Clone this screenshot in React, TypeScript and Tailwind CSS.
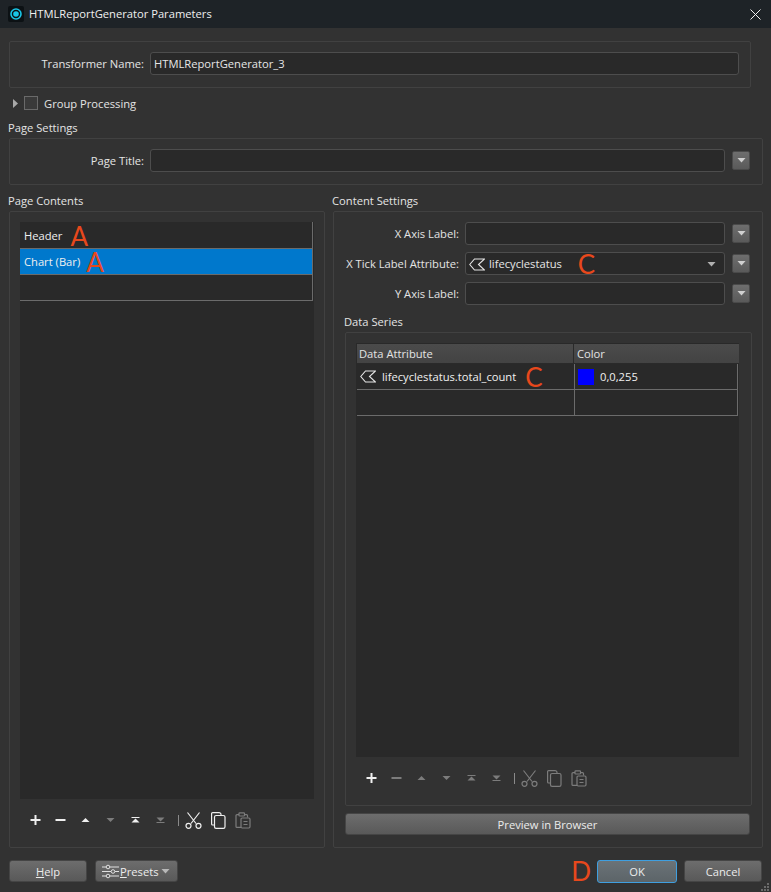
import React from "react";

function Mark({ children, className = "" }: { children: React.ReactNode; className?: string }) {
  return <span className={`font-['Lato',sans-serif] text-[26px] leading-[20px] text-[#e8481c] ${className}`}>{children}</span>;
}

function Arrow({ tone = "#d0d0d0" }: { tone?: string }) {
  return (
    <svg width="9" height="5" viewBox="0 0 9 5"><path d="M0.5 0H8.5L4.5 4.5Z" fill={tone} /></svg>
  );
}

function MenuButton() {
  return (
    <div className="w-[18px] h-[19px] rounded-[2px] border border-[#4a4a4a] bg-gradient-to-b from-[#6e6e6e] to-[#5a5a5a] flex items-center justify-center shrink-0">
      <Arrow />
    </div>
  );
}

function AttrIcon() {
  return (
    <svg width="16" height="13" viewBox="0 0 16 13" fill="none" stroke="#e6e6e6" strokeWidth="1.1" className="shrink-0">
      <path d="M5.5 1H15.5L9.5 6.5L15.5 12H5.5L0.8 6.5Z" />
    </svg>
  );
}

function Field({ label, children, labelW = "w-[141px]" }: { label: string; children?: React.ReactNode; labelW?: string }) {
  return (
    <div className="flex items-center h-[23px]">
      <div className={`${labelW} shrink-0 text-right pr-[6px] pt-[1px]`}>{label}</div>
      {children}
    </div>
  );
}

function Input({ className = "", children }: { className?: string; children?: React.ReactNode }) {
  return (
    <div className={`h-[23px] rounded-[3px] border border-[#4d4d4d] bg-[#292929] flex items-center px-[3px] pt-[1px] text-[#e6e6e6] ${className}`}>
      {children}
    </div>
  );
}

function Group({ className = "", children }: { className?: string; children: React.ReactNode }) {
  return <div className={`border border-[#414141] rounded-[2px] ${className}`}>{children}</div>;
}

type IconName = "plus" | "minus" | "up" | "down" | "top" | "bottom";

function Glyph({ name, tone }: { name: IconName; tone: string }) {
  return (
    <svg width="25" height="24" viewBox="0 0 25 24" fill={tone} className="shrink-0">
      {name === "plus" && <path d="M11.5 7H13.5V11H17.5V13H13.5V17H11.5V13H7.5V11H11.5Z" />}
      {name === "minus" && <rect x="7.5" y="11" width="10" height="2" />}
      {name === "up" && <path d="M12.5 10L16.5 14H8.5Z" />}
      {name === "down" && <path d="M8.5 10H16.5L12.5 14Z" />}
      {name === "top" && (
        <g>
          <rect x="8.5" y="9" width="8" height="1" />
          <path d="M12.5 10.5L16.5 14.5H8.5Z" />
        </g>
      )}
      {name === "bottom" && (
        <g>
          <path d="M8.5 9.5H16.5L12.5 13.5Z" />
          <rect x="8.5" y="14" width="8" height="1" />
        </g>
      )}
    </svg>
  );
}

function Cut({ tone }: { tone: string }) {
  return (
    <svg width="17" height="17" viewBox="0 0 17 17" fill="none" stroke={tone} strokeWidth="1.2" className="shrink-0 mx-[4px]">
      <path d="M2.5 0.5L11 11.5M14.5 0.5L6 11.5" />
      <circle cx="3.5" cy="13.8" r="2.5" />
      <circle cx="13.5" cy="13.8" r="2.5" />
    </svg>
  );
}

function Copy({ tone }: { tone: string }) {
  return (
    <svg width="25" height="17" viewBox="0 0 25 17" fill="none" stroke={tone} strokeWidth="1.2" className="shrink-0">
      <path d="M8.5 13H6.6A1 1 0 0 1 5.6 12V1.6A1 1 0 0 1 6.6 0.6H13A2 2 0 0 1 15 2.6V3.5" />
      <rect x="8.5" y="3.5" width="10.5" height="12.8" rx="1.6" />
    </svg>
  );
}

function Paste({ tone }: { tone: string }) {
  return (
    <svg width="24" height="17" viewBox="0 0 24 17" fill="none" stroke={tone} strokeWidth="1.2" className="shrink-0">
      <path d="M10 15.4H6A1 1 0 0 1 5 14.4V3.6A1 1 0 0 1 6 2.6H8M13.5 2.6H15.5A1 1 0 0 1 16.5 3.6V5.5" />
      <rect x="8" y="0.8" width="5.5" height="3.2" rx="0.8" />
      <rect x="10" y="6" width="9" height="10" rx="1.2" />
      <path d="M12.5 9.5H16.5M12.5 12.5H16.5" />
    </svg>
  );
}

function Toolbar({ on }: { on: boolean }) {
  const white = "#f0f0f0";
  const dim = "#7c7c7c";
  const t = (b: boolean) => (b ? white : dim);
  return (
    <div className="flex items-center h-[24px]">
      <Glyph name="plus" tone={white} />
      <Glyph name="minus" tone={t(on)} />
      <Glyph name="up" tone={t(on)} />
      <Glyph name="down" tone={dim} />
      <Glyph name="top" tone={t(on)} />
      <Glyph name="bottom" tone={dim} />
      <div className="w-[1px] h-[11px] bg-[#8a8a8a] ml-[5px] mr-[2px]" />
      <Cut tone={t(on)} />
      <Copy tone={t(on)} />
      <Paste tone={dim} />
    </div>
  );
}

function Btn({ className = "", children }: { className?: string; children: React.ReactNode }) {
  return (
    <div className={`h-[22px] rounded-[3px] border border-[#454545] bg-gradient-to-b from-[#6d6d6d] to-[#595959] flex items-center justify-center pt-[1px] text-[#ececec] ${className}`}>
      {children}
    </div>
  );
}

export default function App() {
  return (
    <div className="w-[771px] h-[892px] bg-[#323232] text-[#e4e4e4] text-[11.2px] leading-[16px] font-['Open_Sans',sans-serif] flex flex-col overflow-hidden">
      <div className="h-[28px] bg-[#1e2327] flex items-center shrink-0">
        <div className="w-[16px] h-[16px] ml-[8px] bg-[#0c1114] rounded-[2px] flex items-center justify-center">
          <svg width="12" height="12" viewBox="0 0 12 12">
            <circle cx="6" cy="6" r="5" fill="none" stroke="#19c6e6" strokeWidth="1.6" />
            <circle cx="6" cy="6" r="2.8" fill="#19c6e6" />
          </svg>
        </div>
        <div className="ml-[5px] text-[#f0f0f0]">HTMLReportGenerator Parameters</div>
        <svg width="11" height="11" viewBox="0 0 11 11" className="ml-auto mr-[10px]" stroke="#f0f0f0" strokeWidth="1">
          <path d="M0.5 0.5L10.5 10.5M10.5 0.5L0.5 10.5" />
        </svg>
      </div>

      <Group className="ml-[9px] mt-[13px] w-[742px] h-[47px] pt-[10px] shrink-0">
        <Field label="Transformer Name:" labelW="w-[140px]">
          <Input className="w-[589px]">HTMLReportGenerator_3</Input>
        </Field>
      </Group>

      <div className="flex items-center h-[14px] mt-[8px] shrink-0">
        <svg width="5" height="9" viewBox="0 0 5 9" className="ml-[13px]"><path d="M0 0L5 4.5L0 9Z" fill="#a8a8a8" /></svg>
        <div className="w-[14px] h-[14px] ml-[6px] border border-[#6a6a6a] bg-[#3a3a3a]" />
        <div className="ml-[6px] pt-[1px]">Group Processing</div>
      </div>

      <div className="ml-[8px] mt-[10px] h-[16px] shrink-0">Page Settings</div>
      <Group className="ml-[9px] mt-[2px] w-[754px] h-[47px] pt-[10px] shrink-0">
        <div className="flex items-center">
          <Field label="Page Title:" labelW="w-[140px]">
            <Input className="w-[575px]" />
          </Field>
          <div className="ml-[7px]"><MenuButton /></div>
        </div>
      </Group>

      <div className="flex mt-[7px] h-[656px] shrink-0">
        <div className="ml-[8px] w-[318px] flex flex-col">
          <div className="h-[16px] pt-[1px]">Page Contents</div>
          <Group className="ml-[1px] mt-[3px] w-[316px] h-[637px] flex flex-col px-[10px] pt-[10px]">
            <div className="w-[294px] h-[577px] bg-[#292929] flex flex-col">
              <div className="w-[293px] border-r border-[#6b6b6b]">
                <div className="h-[27px] border-b border-[#6b6b6b] flex items-center pl-[4px] pt-[1px] text-[#f0f0f0]">
                  Header<Mark className="ml-[8px]">A</Mark>
                </div>
                <div className="h-[26px] border-b border-[#6b6b6b] bg-[#0078cc] flex items-center pl-[4px] pt-[1px] text-[#f0f0f0]">
                  Chart (Bar)<Mark className="ml-[6px]">A</Mark>
                </div>
                <div className="h-[26px] border-b border-[#6b6b6b]" />
              </div>
            </div>
            <div className="mt-[9px] ml-[3px]"><Toolbar on /></div>
          </Group>
        </div>

        <div className="ml-[6px] w-[432px] flex flex-col">
          <div className="h-[16px] pt-[1px]">Content Settings</div>
          <Group className="ml-[1px] mt-[3px] w-[430px] h-[637px] flex flex-col pt-[10px]">
            <div className="flex flex-col gap-[7px]">
              <div className="flex items-center">
                <Field label="X Axis Label:" labelW="w-[131px]"><Input className="w-[260px]" /></Field>
                <div className="ml-[7px]"><MenuButton /></div>
              </div>
              <div className="flex items-center">
                <Field label="X Tick Label Attribute:" labelW="w-[131px]">
                  <Input className="w-[260px] gap-[4px]">
                    <AttrIcon />
                    <span>lifecyclestatus</span>
                    <Mark className="ml-[12px]">C</Mark>
                    <span className="ml-auto mr-[5px] flex"><Arrow tone="#b0b0b0" /></span>
                  </Input>
                </Field>
                <div className="ml-[7px]"><MenuButton /></div>
              </div>
              <div className="flex items-center">
                <Field label="Y Axis Label:" labelW="w-[131px]"><Input className="w-[260px]" /></Field>
                <div className="ml-[7px]"><MenuButton /></div>
              </div>
            </div>
            <div className="ml-[10px] mt-[9px] h-[16px]">Data Series</div>
            <Group className="ml-[11px] mt-[2px] w-[407px] h-[474px] px-[10px] pt-[10px] flex flex-col">
              <div className="w-[383px] h-[414px] bg-[#292929] flex flex-col">
                <div className="flex h-[20px] mt-[1px] ml-[1px] bg-gradient-to-b from-[#4b4b4b] to-[#434343] border-b border-[#2a2a2a] shrink-0">
                  <div className="w-[217px] border-r border-[#2a2a2a] pl-[2px] pt-[1px] flex items-center">Data Attribute</div>
                  <div className="flex-1 pl-[3px] pt-[1px] flex items-center">Color</div>
                </div>
                <div className="flex h-[26px] ml-[1px] border-b border-r border-[#6b6b6b] shrink-0 w-[381px]">
                  <div className="w-[218px] border-r border-[#6b6b6b] pl-[3px] flex items-center gap-[6px] text-[#f0f0f0]">
                    <AttrIcon />
                    <span>lifecyclestatus.total_count</span>
                    <Mark className="ml-[3px]">C</Mark>
                  </div>
                  <div className="flex-1 pl-[3px] flex items-center gap-[6px] text-[#f0f0f0]">
                    <div className="w-[16px] h-[16px] bg-[#0000ff]" />0,0,255
                  </div>
                </div>
                <div className="flex h-[26px] ml-[1px] border-b border-r border-[#6b6b6b] shrink-0 w-[381px]">
                  <div className="w-[218px] border-r border-[#6b6b6b]" />
                </div>
              </div>
              <div className="mt-[9px] ml-[3px]"><Toolbar on={false} /></div>
            </Group>
            <Btn className="ml-[11px] mt-[7px] w-[405px]">Preview in Browser</Btn>
          </Group>
        </div>
      </div>

      <div className="flex items-center mt-[12px] h-[22px] shrink-0">
        <Btn className="ml-[9px] w-[78px]"><span><span className="underline">H</span>elp</span></Btn>
        <Btn className="ml-[8px] w-[83px]">
          <div className="w-full flex items-center pl-[6px] pr-[7px] gap-[1px]">
            <svg width="17" height="15" viewBox="0 0 17 15" fill="none" stroke="#e0e0e0" strokeWidth="1" className="shrink-0">
              <path d="M0 3H4M8 3H17M0 7.5H9M13 7.5H17M0 12H4M8 12H17" />
              <circle cx="6" cy="3" r="1.8" /><circle cx="11" cy="7.5" r="1.8" /><circle cx="6" cy="12" r="1.8" />
            </svg>
            <span><span className="underline">P</span>resets</span>
            <span className="ml-auto flex"><Arrow tone="#b8b8b8" /></span>
          </div>
        </Btn>
        <Mark className="ml-auto mr-[6px]">D</Mark>
        <div className="w-[80px] h-[23px] rounded-[3px] border border-[#3f9fe0] bg-gradient-to-b from-[#6b7378] to-[#5c6468] flex items-center justify-center pt-[1px] text-[#ececec]">OK</div>
        <Btn className="ml-[7px] mr-[9px] w-[78px]">Cancel</Btn>
      </div>
      <div className="flex justify-end mt-auto pr-[1px] pb-[1px]">
        <svg width="10" height="10" viewBox="0 0 10 10" fill="#6a6a6a">
          <rect x="7" y="1" width="2" height="2" /><rect x="4" y="4" width="2" height="2" /><rect x="7" y="4" width="2" height="2" />
          <rect x="1" y="7" width="2" height="2" /><rect x="4" y="7" width="2" height="2" /><rect x="7" y="7" width="2" height="2" />
        </svg>
      </div>
    </div>
  );
}
